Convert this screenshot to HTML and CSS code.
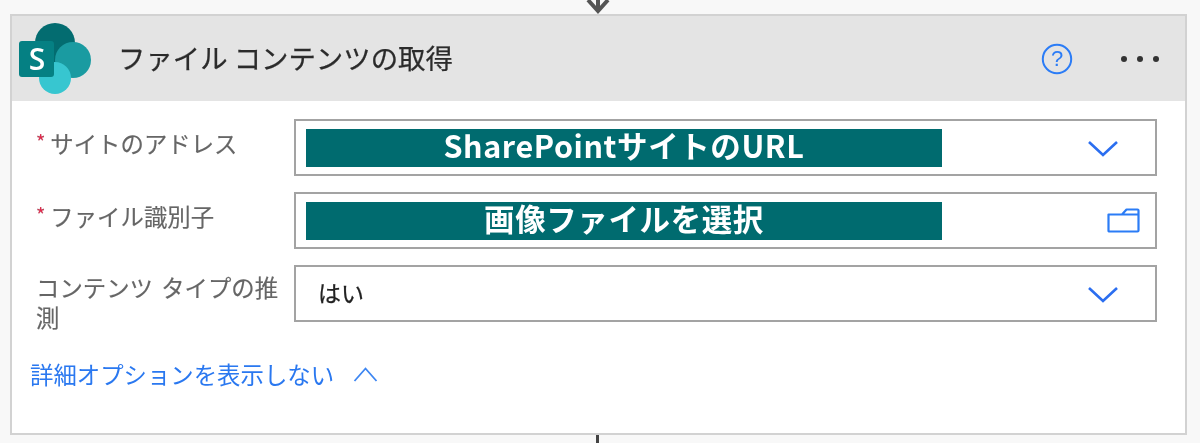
FILE: index.html
```html
<!DOCTYPE html>
<html lang="ja">
<head>
<meta charset="utf-8">
<title>ファイル コンテンツの取得</title>
<link rel="stylesheet" href="styles.css">
</head>
<body>
<svg class="arrow-in" width="32" height="14" viewBox="0 0 32 14" aria-hidden="true"><path d="M6 0 16 11 26 0M16 0V11" fill="none" stroke="#555" stroke-width="4"/></svg>
<main class="card">
  <header class="head">
    <svg class="logo" width="76" height="76" viewBox="0 0 76 76" aria-hidden="true">
      <circle cx="36" cy="23" r="20" fill="#036c70"/>
      <circle cx="54" cy="40" r="18" fill="#1a9ba1"/>
      <circle cx="36" cy="58" r="16" fill="#37c6d0"/>
      <rect x="0" y="21" width="35" height="36" rx="3" fill="#058083"/>
      <text x="18" y="50" class="logo-s">S</text>
    </svg>
    <h1 class="title">ファイル コンテンツの取得</h1>
    <svg class="help" width="32" height="32" viewBox="0 0 32 32" aria-hidden="true">
      <circle cx="16" cy="16" r="14.2" fill="none" stroke="#2b7cf6" stroke-width="2"/>
      <text x="16" y="23" class="help-q">?</text>
    </svg>
    <div class="more"><i></i><i></i><i></i></div>
  </header>
  <section class="body">
    <div class="row">
      <label class="label"><span class="req">*</span>サイトのアドレス</label>
      <div class="field">
        <div class="mask">SharePointサイトのURL</div>
        <svg class="chev" width="32" height="18" viewBox="0 0 32 18" aria-hidden="true"><path d="M2 3 16 16 30 3" fill="none" stroke="#2b6ef0" stroke-width="2.600"/></svg>
      </div>
    </div>
    <div class="row">
      <label class="label"><span class="req">*</span>ファイル識別子</label>
      <div class="field">
        <div class="mask">画像ファイルを選択</div>
        <svg class="folder" width="33" height="25" viewBox="0 0 33 25" aria-hidden="true"><path d="M2 23.500H30.500a1 1 0 0 0 1-1V2.500a1 1 0 0 0-1-1H19.500L15 6.500H1.500V23Z M15 6.500H31.500" fill="none" stroke="#2b7cf6" stroke-width="2.200" stroke-linejoin="round"/></svg>
      </div>
    </div>
    <div class="row">
      <label class="label label-plain">コンテンツ タイプの推測</label>
      <div class="field">
        <div class="value">はい</div>
        <svg class="chev" width="32" height="18" viewBox="0 0 32 18" aria-hidden="true"><path d="M2 3 16 16 30 3" fill="none" stroke="#2b6ef0" stroke-width="2.600"/></svg>
      </div>
    </div>
    <div class="toggle">
      <span>詳細オプションを表示しない</span>
      <svg width="26" height="16" viewBox="0 0 26 16" aria-hidden="true"><path d="M1.500 15 12.500 2.500 23.500 15" fill="none" stroke="#3d86f2" stroke-width="1.800"/></svg>
    </div>
  </section>
</main>
<div class="line-out"></div>
</body>
</html>
```
FILE: styles.css
```css
* { box-sizing: border-box; }
html, body { margin: 0; height: 443px; overflow: hidden; }
body {
  background: #f8f8f8;
  font-family: "Noto Sans CJK JP", "Liberation Sans", sans-serif;
  padding: 14px 13px 0 10px;
  position: relative;
}
.arrow-in { position: absolute; left: 582px; top: 0; filter: blur(.6px); }
.line-out { position: absolute; left: 596px; top: 435px; width: 3px; height: 8px; background: #444; }
.card {
  height: 421px;
  border: 2px solid #d2d2d2;
  background: #fff;
  filter: blur(.55px);
}
.head {
  height: 85px;
  background: #e4e4e4;
  display: flex;
  align-items: center;
  padding: 0 26px 0 7px;
}
.logo { flex: none; margin-top: -1px; }
.logo-s { font: 600 30px "Open Sans", sans-serif; fill: #fff; text-anchor: middle; }
.title {
  flex: 1;
  margin: -2px 0 0 23px;
  font-size: 27.400px;
  font-weight: 400;
  color: #2b2b2b;
  line-height: 1.2;
  -webkit-text-stroke: .25px #2b2b2b;
}
.help { margin-right: 48px; }
.help-q { font: 22px "Liberation Sans", sans-serif; fill: #2b7cf6; text-anchor: middle; }
.more { display: flex; gap: 10px; }
.more i { width: 6px; height: 6px; border-radius: 50%; background: #333; }
.body { padding: 18px 28px 0 0; }
.row { display: flex; height: 57px; margin-bottom: 16px; }
.label {
  width: 282px;
  flex: none;
  padding: 6px 10px 0 24px;
  font-size: 23.400px;
  line-height: 33px;
  color: #666;
  -webkit-text-stroke: .15px #666;
}
.label-plain { padding-top: 7px; line-height: 30px; word-spacing: 3px; }
.req { color: #e8264a; font-size: 20px; margin-right: 5px; vertical-align: 3px; }
.field {
  flex: 1;
  border: 2px solid #a3a3a3;
  display: flex;
  align-items: center;
  padding: 0 36px 0 10px;
  background: #fff;
  justify-content: space-between;
}
.mask {
  width: 636px;
  height: 38px;
  background: #006b6f;
  color: #fff;
  font-size: 30.500px;
  font-weight: 700;
  line-height: 32px;
  text-align: center;
  letter-spacing: .6px;
}
.value { margin-left: 12px; padding-bottom: 4px; font-size: 23px; color: #222; -webkit-text-stroke: .25px #222; }
.folder { margin-right: -21px; }
.toggle {
  display: flex;
  align-items: center;
  gap: 19px;
  margin: 34px 0 0 18px;
  font-size: 23.400px;
  line-height: 36px;
  color: #2a78f0;
}
```
